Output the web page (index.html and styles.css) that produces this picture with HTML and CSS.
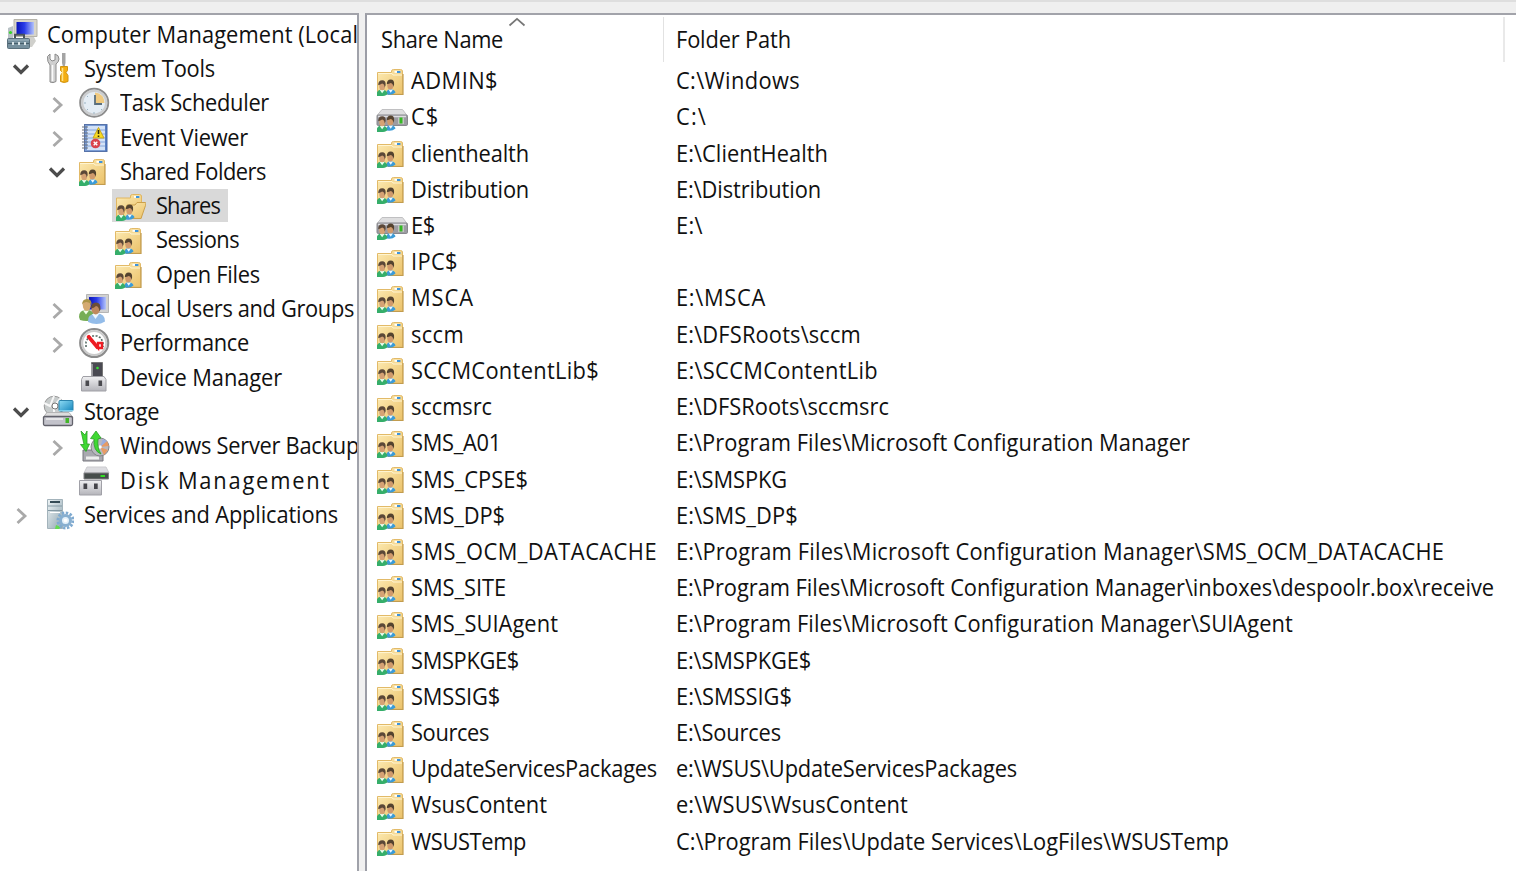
FILE: index.html
```html
<!DOCTYPE html>
<html lang="en">
<head>
<meta charset="utf-8">
<title>Computer Management</title>
<link rel="stylesheet" href="styles.css">
</head>
<body>
<svg class="defs" width="0" height="0">
  <defs>
    <linearGradient id="gFolder" x1="0" y1="0" x2="1" y2="1"><stop offset="0" stop-color="#fdebb4"/><stop offset="1" stop-color="#ebc26a"/></linearGradient>
    <linearGradient id="gScreen" x1="0" y1="0" x2="1" y2="0"><stop offset="0" stop-color="#0a14b8"/><stop offset=".45" stop-color="#2a3ce8"/><stop offset="1" stop-color="#b4c4fa"/></linearGradient>
    <linearGradient id="gBox" x1="0" y1="0" x2="0" y2="1"><stop offset="0" stop-color="#f0f0f2"/><stop offset="1" stop-color="#b4b4ba"/></linearGradient>
    <linearGradient id="gTower" x1="0" y1="0" x2="1" y2="1"><stop offset="0" stop-color="#eef4f6"/><stop offset="1" stop-color="#8fa5b0"/></linearGradient>
    <linearGradient id="gBlue" x1="0" y1="0" x2="1" y2="1"><stop offset="0" stop-color="#8fdcf5"/><stop offset="1" stop-color="#1586bd"/></linearGradient>
  </defs>
  <symbol id="people" viewBox="0 0 20 20" overflow="visible">
    <path d="M9 18.500q0-5 4.500-5.500q4.500 .5 5 3.500q-2.500 2.300-6 2.300z" fill="#3a9bd8"/>
    <path d="M11.500 13.500l2.200 3.200 2.300-3.200z" fill="#eef9ff"/>
    <ellipse cx="13.300" cy="9.300" rx="3" ry="4.300" fill="#d09a6c"/>
    <path d="M9.800 8.200q0-4.700 3.900-4.700q3.800 0 3.400 5l-.9 2.500q0-3.600-2.400-4q-1.800 .9-4 1.200z" fill="#54432f"/>
    <path d="M0 20v-3.500q1-3 5-3t5.500 3.800q-1 2.700-4.500 2.700z" fill="#35ae6a"/>
    <path d="M2.800 14l2.300 3.200 2.500-3.200z" fill="#e8fff1"/>
    <ellipse cx="5.200" cy="10" rx="3" ry="4.200" fill="#d5a274"/>
    <path d="M1.200 9.200q0-4.900 4-4.900q3.900 0 3.400 5l-1 2.200q.1-3.600-2.500-4q-1.700 1.100-3.900 1.700z" fill="#5b4838"/>
  </symbol>
  <symbol id="folder" viewBox="0 0 32 32">
    <path d="M1.500 29V7.500h14V6q.2-1.500 2-1.500h7q1.800 0 2 1.500V29z" fill="url(#gFolder)" stroke="#e2ba68"/>
    <path d="M2 8.500h14l1 1.500h9" fill="none" stroke="#fff5d2"/>
    <path d="M18.500 5.800h5.500v2h-5.500z" fill="#fff"/><path d="M21 6h3.400v2H21z" fill="#3e94dc"/>
    <path d="M27 9v20.500H12" fill="none" stroke="#c29c4e" stroke-width="1.200"/>
    <use href="#people" x="1" y="11" width="20" height="20"/>
  </symbol>
  <symbol id="open" viewBox="0 0 32 32">
    <path d="M2.500 28V8h14V6q.2-1.500 2-1.500h7q1.800 0 2 1.500v22z" fill="url(#gFolder)" stroke="#e0b661"/>
    <path d="M20 5.800h5.500v2H20z" fill="#fff"/><path d="M22 6h3.400v2H22z" fill="#3e94dc"/>
    <path d="M8 28.500L13 15h8l2-2.500h8.500q.8 1 0 3L27 28.500z" fill="url(#gFolder)" stroke="#cba04c"/>
    <use href="#people" x="2" y="11" width="20" height="20"/>
  </symbol>
  <symbol id="drive" viewBox="0 0 32 32">
    <path d="M6 8.500h20.500l4.500 6H1z" fill="#dededf" stroke="#c0c0c2"/>
    <rect x="1" y="14" width="30.500" height="10.500" rx="1.200" fill="#9c9ca2" stroke="#88888d"/>
    <path d="M2 15.500h28" stroke="#dedee1" stroke-width="1.500"/>
    <rect x="22" y="16.500" width="6" height="6.500" fill="#c4c4c4"/><rect x="23.500" y="16.500" width="3" height="6" fill="#35b824"/>
    <use href="#people" x="1" y="11" width="20" height="20"/>
  </symbol>
  <symbol id="computer" viewBox="0 0 32 32">
    <path d="M2 10l5-2v13H2z" fill="#b9c2c6"/><circle cx="4.500" cy="14.500" r="1.600" fill="#38d62c"/>
    <path d="M8 1.500h23v17H8z" fill="#d8d5c9" stroke="#b5b3aa"/>
    <path d="M10.500 4H28v12.500H10.500z" fill="url(#gScreen)"/>
    <path d="M19 19h9l2 4-4 6h-7z" fill="#d0d0cc"/>
    <path d="M9 20.500v-3.700h9v3.700" fill="none" stroke="#49545b" stroke-width="2"/>
    <rect x="1.500" y="20.500" width="22" height="10" rx="1" fill="#76909e" stroke="#5a707d"/>
    <path d="M2 22h21" stroke="#a4bac5"/><path d="M2 25.500h21" stroke="#465e6b"/>
    <path d="M6 24h2v3H6zM12 24h2v3h-2zM18 24h2v3h-2z" fill="#dce6ea"/>
  </symbol>
  <symbol id="tools" viewBox="0 0 32 32">
    <path d="M5.500 4.500L8 2v5l2 2 3-1V2q4 1 4 5-.2 3-3 5v17.500q-3 2-6 .5V13Q5 10 5.500 4.500z" fill="#cfcfcf" stroke="#8c8c8c"/>
    <path d="M10.500 13v16" stroke="#fafafa" stroke-width="1.500"/>
    <path d="M20 1h3.500v10l-.7 3h-2l-.8-3z" fill="#a4a4a4"/>
    <path d="M18.500 14.500h7v4l-1.500 2 2 3v6q-4 2-7.500 0v-6l2-3-2-2z" fill="#f4ae12" stroke="#d09412"/>
    <path d="M20.500 16v13" stroke="#ffe188" stroke-width="1.500"/>
  </symbol>
  <symbol id="clock" viewBox="0 0 32 32">
    <circle cx="16.200" cy="15.700" r="14" fill="#e6eff5" stroke="#8c8c8c" stroke-width="2"/>
    <circle cx="16.200" cy="15.700" r="12" fill="#e4edf5" stroke="#cbcdcf" stroke-width="2.400"/>
    <path d="M17 16V5.500q9 1 9.500 10.500z" fill="#f0ca80"/>
    <path d="M17 8v9h7" fill="none" stroke="#5a6f7e" stroke-width="1.800"/>
    <path d="M6 16h2M16 25v2M9 9l1 1M9 23l1-1M24 23l-1-1" stroke="#9bb3c2"/>
  </symbol>
  <symbol id="event" viewBox="0 0 32 32">
    <rect x="6.500" y="3.500" width="22.500" height="27" fill="#7b9dd5" stroke="#5672a8"/>
    <path d="M9 5h18v24H9z" fill="#d3e2f7"/>
    <path d="M9 9h18M9 13h18M9 17h18M9 21h18M9 25h18" stroke="#86a6da"/>
    <path d="M28.200 4v26" stroke="#4a70b6" stroke-width="1.700"/>
    <path d="M4 6h6M4 9h6M4 12h6M4 15h6M4 18h6M4 21h6M4 24h6M4 27h6" stroke="#6b737f" stroke-width="1.200"/>
    <path d="M20.500 6.500L26 17H15z" fill="#f8dc20" stroke="#c6a521"/><path d="M20.500 9v4M20.500 14.500v1.500" stroke="#332b07" stroke-width="1.600"/>
    <circle cx="17.500" cy="22.500" r="4.800" fill="#d9444c"/><path d="M15.700 20.700l3.600 3.600M19.300 20.700l-3.600 3.600" stroke="#fff" stroke-width="1.400"/>
  </symbol>
  <symbol id="users" viewBox="0 0 32 32">
    <path d="M8.500 1.500h22v18h-22z" fill="#d1d1d1" stroke="#b5b5b5"/><path d="M11 4h17v12.500H11z" fill="url(#gScreen)"/>
    <path d="M1 24q0-7 7-7t8 5v5q-8 2-14 0z" fill="#76ad55"/><path d="M5 17.500l3 4 3-4z" fill="#f0ffe8"/><ellipse cx="8.800" cy="12.500" rx="4" ry="5.200" fill="#d5ab72"/>
    <path d="M4 12q0-6 5-6t4.500 6q-2-3-5-3t-4.500 3z" fill="#ab9548"/>
    <path d="M10 29q-1-8 8-8.500t9 8q-4 2.500-8.500 2.500t-8.500-2z" fill="#93bce9"/><path d="M14 21l3.500 5 3.500-5z" fill="#eef7ff"/>
    <ellipse cx="17.700" cy="16" rx="4.200" ry="5.400" fill="#bf895f"/><path d="M13 15.500q0-6 5-6t4.500 7l-1.200 2q0-5-3.300-5.500-2 2-5 2.500z" fill="#6a4d38"/>
  </symbol>
  <symbol id="perf" viewBox="0 0 32 32">
    <circle cx="16.200" cy="16" r="14" fill="#fff" stroke="#8c8c8c" stroke-width="2.200"/><circle cx="16.200" cy="16" r="12" fill="#fff" stroke="#cbcbcb" stroke-width="2"/>
    <path d="M8 20v-5l2-4 4-2h5l4 2 2 5v4" fill="none" stroke="#566b64" stroke-width="1.600" stroke-dasharray="2 1.500"/>
    <path d="M9.500 8.500L20 21v-5h4v5h-4" fill="none" stroke="#ed1b22" stroke-width="2.400"/><path d="M10 9l10 12" stroke="#ed1b22" stroke-width="3.600"/>
  </symbol>
  <symbol id="device" viewBox="0 0 32 32">
    <path d="M13.500 1.500h11v14h-11z" fill="#4a4a52" stroke="#777"/><path d="M14 15V3" stroke="#b0b0b5" stroke-width="1.500"/>
    <circle cx="19.500" cy="7" r="1.300" fill="#36e332"/>
    <path d="M5 15.500h21l2 3V30H3.500V18.500z" fill="url(#gBox)" stroke="#a0a0a6"/>
    <path d="M7.500 19.500h3.600V25H7.500zM20.500 19.500h3.600V25h-3.600z" fill="#4a4a4f"/>
  </symbol>
  <symbol id="storage" viewBox="0 0 32 32">
    <circle cx="12" cy="11" r="9.800" fill="#c8cccc" stroke="#999"/><path d="M12 1L8 11l-6-3M12 20v-9l7-8" stroke="#f7f7f7" stroke-width="2" fill="none"/>
    <circle cx="13" cy="11" r="3" fill="#fff" stroke="#777"/>
    <rect x="17" y="5.500" width="14" height="10.500" rx="1" fill="url(#gBlue)" stroke="#2b83ac"/><path d="M17 15.500h14" stroke="#7ed0ed"/>
    <path d="M5 17.500h22l4 5H1z" fill="#ddd" stroke="#b5b5b5"/>
    <rect x="1.500" y="21.500" width="29" height="9" rx="1.500" fill="#c3c3cb" stroke="#62626b" stroke-width="1.300"/>
    <path d="M4 24h17" stroke="#f0f0f0" stroke-width="1.500"/><path d="M23.500 23h3.500v5h-3.500z" fill="#43b629"/>
  </symbol>
  <symbol id="backup" viewBox="0 0 32 32">
    <path d="M5 20h18l2 6v5H5z" fill="#a9a9b0" stroke="#77777e"/><path d="M8 26.500h13v3H8z" fill="#eee"/>
    <circle cx="22" cy="17" r="9" fill="#b9b9c0" stroke="#85858a"/><path d="M22 17l7-6 2 5zM22 17l8 3-4 5z" fill="#e79b65"/><path d="M22 17l3-8 4 2z" fill="#9baee0"/><circle cx="22" cy="17" r="1.800" fill="#fff"/>
    <path d="M3 1l4 4 2-4v13h2.500L8 21.500l-5.500-7H6z" fill="#3fd832" stroke="#2a9f26" stroke-width=".8"/>
    <path d="M18 1l5 7-3 1q-1 9 3 15-8-3-7-15l-3.500-.5z" fill="#3fd832" stroke="#2a9f26" stroke-width=".8"/>
  </symbol>
  <symbol id="disk" viewBox="0 0 32 32">
    <path d="M9 3h19l3 6H6z" fill="#dcdce0" stroke="#cbcbcf"/>
    <path d="M6 9h24.500v6H6z" fill="#464d4b" stroke="#808084"/><path d="M22.500 12h4.500" stroke="#33dc25" stroke-width="2"/>
    <path d="M1.500 16.500h22V31h-22z" fill="url(#gBox)" stroke="#a0a0a7"/>
    <path d="M5.500 19.500h3.700V25H5.500zM16 19.500h3.700V25H16z" fill="#45454a"/>
  </symbol>
  <symbol id="services" viewBox="0 0 32 32">
    <path d="M5.500 1.500h15v29h-15z" fill="url(#gTower)" stroke="#a3b3bb"/>
    <path d="M8 4h10" stroke="#344a55" stroke-width="2"/><path d="M6 8h14M6 12.500h14" stroke="#8499a4"/><path d="M8 14.500h10" stroke="#fff"/>
    <path d="M14 27l5 2-2 2h-4z" fill="#62dc50"/>
    <circle cx="23.500" cy="22.500" r="7.500" fill="none" stroke="#7faad0" stroke-width="3" stroke-dasharray="2.400 1.530"/>
    <circle cx="23.500" cy="22.500" r="5" fill="#e5f1fa" stroke="#88afd0" stroke-width="3"/><circle cx="23.500" cy="22.500" r="1.800" fill="#fff"/>
  </symbol>
  <symbol id="down" viewBox="0 0 30 32"><path d="M8 13.500l7 7 7-7" fill="none" stroke="#4c4c4c" stroke-width="3.200"/></symbol>
  <symbol id="right" viewBox="0 0 30 32"><path d="M11.500 11l7.500 7-7.500 7" fill="none" stroke="#a9a9a9" stroke-width="2.800"/></symbol>
</svg>
<div class="toolbar-edge"></div>
<main class="panes">
  <nav class="tree" id="tree"></nav>
  <section class="list">
    <header class="head">
      <div class="col name"><span class="fit" data-w="122">Share Name</span>
        <svg class="sort" viewBox="0 0 18 10"><path d="M1.500 8.500L9 1.800l7.500 6.700" fill="none" stroke="#777" stroke-width="1.700"/></svg>
      </div>
      <div class="col path"><span class="fit" data-w="115">Folder Path</span></div>
    </header>
    <div id="rows"></div>
  </section>
</main>
<script src="app.js"></script>
</body>
</html>
```
FILE: styles.css
```css
* { box-sizing: border-box; }
body {
  margin: 0;
  height: 871px;
  overflow: hidden;
  display: flex;
  flex-direction: column;
  background: #f0f0f0;
  color: #111;
  font: 23.5px/32px "Open Sans", "Noto Sans", sans-serif;
  font-kerning: none;
}
.defs { position: absolute; }
.toolbar-edge { flex: none; height: 13px; border-top: 2px solid #dedede; background: #efefef; }
.panes { flex: 1; min-height: 0; display: flex; gap: 6px; }
.tree, .list { background: #fff; border-top: 2px solid #a2a3aa; overflow: hidden; }
.tree { width: 359px; flex: none; border-right: 2px solid #a0a2aa; padding-top: 2px; }
.list { flex: 1; min-width: 0; border-left: 2px solid #9b9da6; padding-left: 8px; }
.node { display: flex; align-items: center; height: 34.3px; white-space: nowrap; }
.node.level0, .node.level1 { padding-left: 6px; }
.node.level2 { padding-left: 42px; }
.node.level3 { padding-left: 78px; }
.twisty { width: 30px; height: 32px; flex: none; margin-right: 4px; }
.item { display: flex; align-items: center; height: 33px; gap: 10px; padding: 0 8px 0 2px; flex: none; }
.level0 .item { padding-left: 0; gap: 9px; }
.selected .item { background: #d9d9d9; }
.icon { width: 32px; height: 32px; flex: none; display: block; }
.fit { display: block; white-space: pre; transform-origin: 0 50%; transform: scaleX(.93); }
.item .fit { margin-top: -1px; }
.head { display: flex; height: 48px; padding-top: 2px; }
.col { height: 45px; padding-top: 6px; border-right: 1px solid #e2e2e2; }
.name { width: 289px; padding-left: 6px; position: relative; }
.path { width: 841px; padding-left: 12px; border-right: 2px solid #e9e9e9; }
.sort { position: absolute; left: 133px; top: 0; width: 18px; height: 10px; }
.row { display: grid; grid-template-columns: 36px 265px 1fr; align-items: center; height: 36.22px; white-space: nowrap; }
.row .icon { margin: -1px 0 0 .5px; }
.row .fit { margin-top: -2px; }
```
FILE: app.js
```js
const nodes = [
  [0, "", "computer", "Computer Management (Local", 311],
  [1, "down", "tools", "System Tools", 131],
  [2, "right", "clock", "Task Scheduler", 149],
  [2, "right", "event", "Event Viewer", 128],
  [2, "down", "folder", "Shared Folders", 146],
  [3, "", "open", "Shares", 64],
  [3, "", "folder", "Sessions", 83],
  [3, "", "folder", "Open Files", 104],
  [2, "right", "users", "Local Users and Groups", 234],
  [2, "right", "perf", "Performance", 129],
  [2, "", "device", "Device Manager", 162],
  [1, "down", "storage", "Storage", 75],
  [2, "right", "backup", "Windows Server Backup", 239],
  [2, "", "disk", "Disk Management", 211],
  [1, "right", "services", "Services and Applications", 254]
];
const shares = [
  ["folder", "ADMIN$", 87, "C:\\Windows", 124],
  ["drive", "C$", 28, "C:\\", 31],
  ["folder", "clienthealth", 118, "E:\\ClientHealth", 152],
  ["folder", "Distribution", 118, "E:\\Distribution", 145],
  ["drive", "E$", 24, "E:\\", 27],
  ["folder", "IPC$", 47, "", 0],
  ["folder", "MSCA", 63, "E:\\MSCA", 90],
  ["folder", "sccm", 53, "E:\\DFSRoots\\sccm", 185],
  ["folder", "SCCMContentLib$", 188, "E:\\SCCMContentLib", 202],
  ["folder", "sccmsrc", 81, "E:\\DFSRoots\\sccmsrc", 213],
  ["folder", "SMS_A01", 90, "E:\\Program Files\\Microsoft Configuration Manager", 514],
  ["folder", "SMS_CPSE$", 117, "E:\\SMSPKG", 111],
  ["folder", "SMS_DP$", 94, "E:\\SMS_DP$", 122],
  ["folder", "SMS_OCM_DATACACHE", 246, "E:\\Program Files\\Microsoft Configuration Manager\\SMS_OCM_DATACACHE", 768],
  ["folder", "SMS_SITE", 95, "E:\\Program Files\\Microsoft Configuration Manager\\inboxes\\despoolr.box\\receive", 818],
  ["folder", "SMS_SUIAgent", 147, "E:\\Program Files\\Microsoft Configuration Manager\\SUIAgent", 617],
  ["folder", "SMSPKGE$", 108, "E:\\SMSPKGE$", 135],
  ["folder", "SMSSIG$", 89, "E:\\SMSSIG$", 116],
  ["folder", "Sources", 78, "E:\\Sources", 105],
  ["folder", "UpdateServicesPackages", 246, "e:\\WSUS\\UpdateServicesPackages", 341],
  ["folder", "WsusContent", 136, "e:\\WSUS\\WsusContent", 232],
  ["folder", "WSUSTemp", 115, "C:\\Program Files\\Update Services\\LogFiles\\WSUSTemp", 553]
];
const icon = (id, cls = "icon") => `<svg class="${cls}"><use href="#${id}"/></svg>`;
const text = (s, w) => `<span class="fit" data-w="${w}">${s}</span>`;

document.getElementById("tree").innerHTML = nodes.map(([level, state, id, label, w]) => {
  const twisty = level === 0 ? "" : state ? icon(state, "twisty") : '<span class="twisty"></span>';
  return `<div class="node level${level}${label === "Shares" ? " selected" : ""}">${twisty}<div class="item">${icon(id)}${text(label, w)}</div></div>`;
}).join("");

document.getElementById("rows").innerHTML = shares.map(([id, name, w, path, pw]) =>
  `<div class="row">${icon(id)}${text(name, w)}${text(path, pw)}</div>`).join("");

// Track each condensed label to its width.
const CONDENSE = 0.93;
document.querySelectorAll(".fit").forEach(el => {
  const n = el.textContent.length;
  if (!n) return;
  const range = document.createRange();
  range.selectNodeContents(el);
  const drawn = range.getBoundingClientRect().width;
  el.style.letterSpacing = ((el.dataset.w - drawn) / CONDENSE / n).toFixed(3) + "px";
});
// The item box hugs the drawn width of its label.
document.querySelectorAll(".item .fit").forEach(el => { el.style.width = el.dataset.w + "px"; });
```
